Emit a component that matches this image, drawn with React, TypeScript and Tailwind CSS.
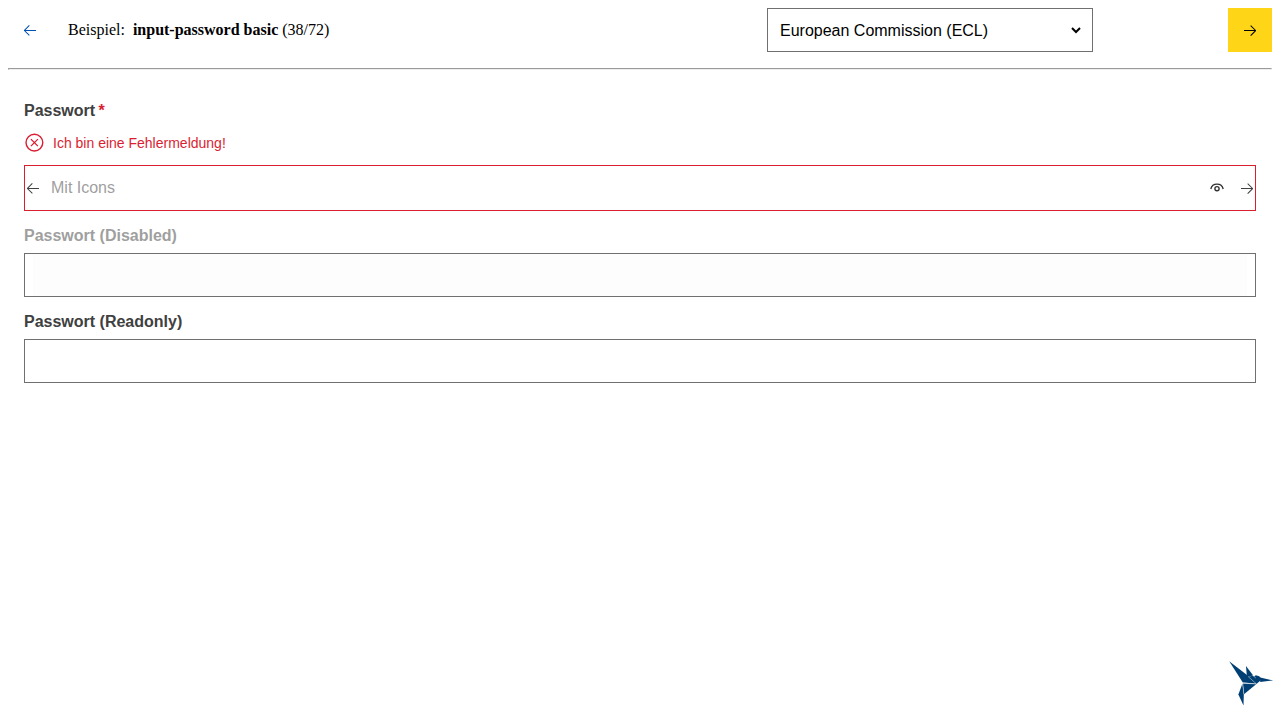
import React from 'react';

const LEFT = 'M7 3.093l-5 5V8.8l5 5 .707-.707-4.146-4.147H14v-1H3.56L7.708 3.8 7 3.093z';
const RIGHT = 'M9 13.887l5-5V8.18l-5-5-.707.707 4.146 4.147H2v1h10.44L8.292 13.18l.707.707z';

function Arrow({ d }: { d: string }) {
  return (
    <svg className="size-4 shrink-0" viewBox="0 0 16 16" fill="currentColor" aria-hidden="true">
      <path d={d} />
    </svg>
  );
}

function Eye() {
  return (
    <svg className="size-4 shrink-0 text-[#303030]" viewBox="0 0 16 16" fill="none" stroke="currentColor" strokeWidth="1.35" aria-hidden="true">
      <circle cx="8" cy="8.67" r="2.1" />
      <path d="M1.8 9C2.5 6 5 4.1 8 4.1s5.5 1.9 6.2 4.9" />
    </svg>
  );
}

function ErrorIcon() {
  return (
    <svg className="size-5 shrink-0" viewBox="0 0 20 20" fill="none" stroke="currentColor" aria-hidden="true">
      <circle cx="10.4" cy="9.6" r="8.4" strokeWidth="1.4" />
      <path d="M6.9 6.1l7 7M13.9 6.1l-7 7" strokeWidth="1.3" />
    </svg>
  );
}

function Hummingbird() {
  return (
    <svg className="size-[60px]" viewBox="0 0 60 60" fill="#003f73" aria-hidden="true">
      <path d="M9.2 6.3L28 20.8 35.6 28.6 22.8 27.6z" />
      <path d="M26 11L33 20.3 28.6 22.1 26.8 20.4z" />
      <path d="M28.6 21.9L32.8 20.6 36.2 23 37 27.8 35 28.6z" />
      <path d="M33 22.6L35.8 20.3 39.2 21.2 42 24.3 36.4 29 33.6 26.2z" />
      <path d="M40.2 22.6L53.2 25.4 40.2 27z" />
      <path d="M22.8 28.4L36.4 29 24 39.2z" />
      <path d="M22.4 28.8L23.8 39.2 23.5 50.5 18.4 39.4z" />
      <path d="M28 21.4l8.4 7.5M22.5 28l13.5 1M32.7 20.4l3.2 2.7" fill="none" stroke="#d8e4ed" strokeWidth="0.5" />
      <path d="M22.9 28.8l.9 10.4" fill="none" stroke="#d8e4ed" strokeWidth="0.45" />
    </svg>
  );
}

export default function App() {
  return (
    <div className="flex h-screen flex-col bg-white px-2 pt-2 font-['Liberation_Sans',sans-serif] text-base leading-5 text-[#404040]">
      <header className="flex h-11 items-center">
        <button className="flex size-11 items-center justify-center text-[#0050b0]" aria-label="Zurück">
          <Arrow d={LEFT} />
        </button>
        <div className="ml-4 w-[699px] font-['Liberation_Serif',serif] text-black">
          Beispiel:&nbsp; <strong>input-password basic</strong> (38/72)
        </div>
        <div className="flex h-11 w-[326px] items-center justify-between border border-[#707070] pr-[11px] pl-3 text-black">
          <span className="pt-0.5">European Commission (ECL)</span>
          <svg className="h-2.5 w-2.5" viewBox="0 0 10 10" fill="none" stroke="currentColor" strokeWidth="2" aria-hidden="true">
            <path d="M1 3l4 4 4-4" />
          </svg>
        </div>
        <button className="ml-auto flex size-11 items-center justify-center bg-[#ffd617] text-black" aria-label="Weiter">
          <Arrow d={RIGHT} />
        </button>
      </header>
      <div className="mt-4 h-0.5 shrink-0 border-t border-r border-b border-l border-t-[#9a9a9a] border-r-[#eeeeee] border-b-[#eeeeee] border-l-[#9a9a9a]" />
      <main className="flex flex-col px-4 pt-[31px]">
        <label className="h-5 font-bold">
          Passwort <span className="-ml-px text-[#da1e32]">*</span>
        </label>
        <div className="mt-3 flex h-5 items-center gap-[9px] text-sm leading-5 text-[#da1e32]">
          <ErrorIcon />
          <span>Ich bin eine Fehlermeldung!</span>
        </div>
        <div className="mt-3 flex h-[46px] items-center border border-[#da1e32]">
          <Arrow d={LEFT} />
          <span className="ml-2.5 flex-1 text-[#9f9f9f]">Mit Icons</span>
          <Eye />
          <span className="ml-3.5 flex">
            <Arrow d={RIGHT} />
          </span>
        </div>
        <label className="mt-[15px] h-5 font-bold text-[#9f9f9f]">Passwort (Disabled)</label>
        <div className="mt-[7px] flex h-11 border border-[#707070] px-2">
          <div className="flex-1 bg-[#fdfdfd]" />
        </div>
        <label className="mt-[15px] h-5 font-bold">Passwort (Readonly)</label>
        <div className="mt-[7px] h-11 border border-[#707070]" />
      </main>
      <div className="mt-auto -mr-2 mb-[5px] self-end">
        <Hummingbird />
      </div>
    </div>
  );
}
